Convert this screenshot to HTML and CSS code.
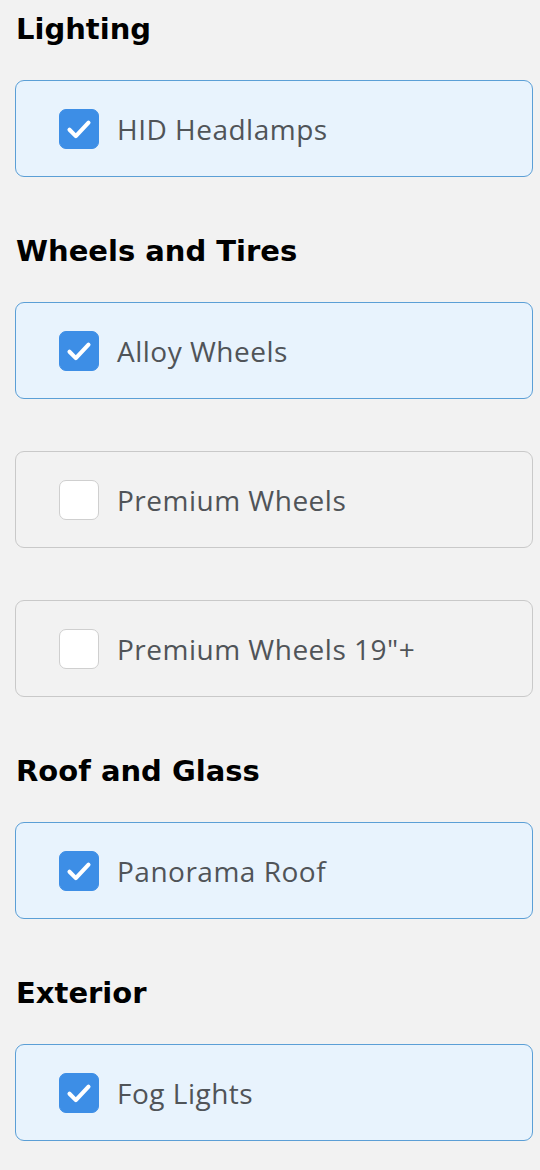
FILE: index.html
```html
<!DOCTYPE html>
<html lang="en">
<head>
    <meta charset="UTF-8">
    <meta name="viewport" content="width=device-width, initial-scale=1.0">
    <title>Options</title>
    <link rel="stylesheet" href="styles.css">
</head>
<body>

    <div class="options">
        <div class="section">
            <h2 class="section-title">Lighting</h2>
            <label class="option checked">
                <span class="box"><svg viewBox="0 0 24 24"><path d="M6 12.5l4 4 8-8.5"/></svg></span>
                <span class="label">HID Headlamps</span>
            </label>
        </div>

        <div class="section">
            <h2 class="section-title">Wheels and Tires</h2>
            <label class="option checked">
                <span class="box"><svg viewBox="0 0 24 24"><path d="M6 12.5l4 4 8-8.5"/></svg></span>
                <span class="label">Alloy Wheels</span>
            </label>
            <label class="option">
                <span class="box"></span>
                <span class="label">Premium Wheels</span>
            </label>
            <label class="option">
                <span class="box"></span>
                <span class="label">Premium Wheels 19"+</span>
            </label>
        </div>

        <div class="section">
            <h2 class="section-title">Roof and Glass</h2>
            <label class="option checked">
                <span class="box"><svg viewBox="0 0 24 24"><path d="M6 12.5l4 4 8-8.5"/></svg></span>
                <span class="label">Panorama Roof</span>
            </label>
        </div>

        <div class="section">
            <h2 class="section-title">Exterior</h2>
            <label class="option checked">
                <span class="box"><svg viewBox="0 0 24 24"><path d="M6 12.5l4 4 8-8.5"/></svg></span>
                <span class="label">Fog Lights</span>
            </label>
        </div>
    </div>

</body>
</html>
```

FILE: styles.css
```css
body {
    margin: 0;
    padding: 0;
    background: #f2f2f2;
    font-family: 'Open Sans', 'Liberation Sans', sans-serif;
}

.options {
    display: flex;
    flex-direction: column;
    gap: 57px;
    padding: 12px 7px 0 15px;
}

.section {
    display: flex;
    flex-direction: column;
    gap: 52px;
}

.section-title {
    margin: 0 0 -18px 1px;
    font-family: 'DejaVu Sans', sans-serif;
    font-weight: bold;
    font-size: 29px;
    line-height: 34px;
    color: #000;
}

.option {
    display: flex;
    align-items: center;
    height: 97px;
    box-sizing: border-box;
    padding-left: 43px;
    border: 1.5px solid #c9c9c9;
    border-radius: 9px;
    background-color: #f2f2f2;
}

.option.checked {
    border-color: #5b9fd6;
    background-color: #e8f3fd;
}

.box {
    display: flex;
    align-items: center;
    justify-content: center;
    width: 40px;
    height: 40px;
    box-sizing: border-box;
    margin-right: 18px;
    border: 1.5px solid #cfcfcf;
    border-radius: 7px;
    background-color: #fff;
}

.checked .box {
    border-color: #3d8ee6;
    background-color: #3d8ee6;
}

.box svg {
    width: 38px;
    height: 38px;
    fill: none;
    stroke: #fff;
    stroke-width: 2.6;
    stroke-linecap: round;
    stroke-linejoin: round;
}

.label {
    font-size: 28px;
    letter-spacing: 0.5px;
    color: #505458;
}
```
